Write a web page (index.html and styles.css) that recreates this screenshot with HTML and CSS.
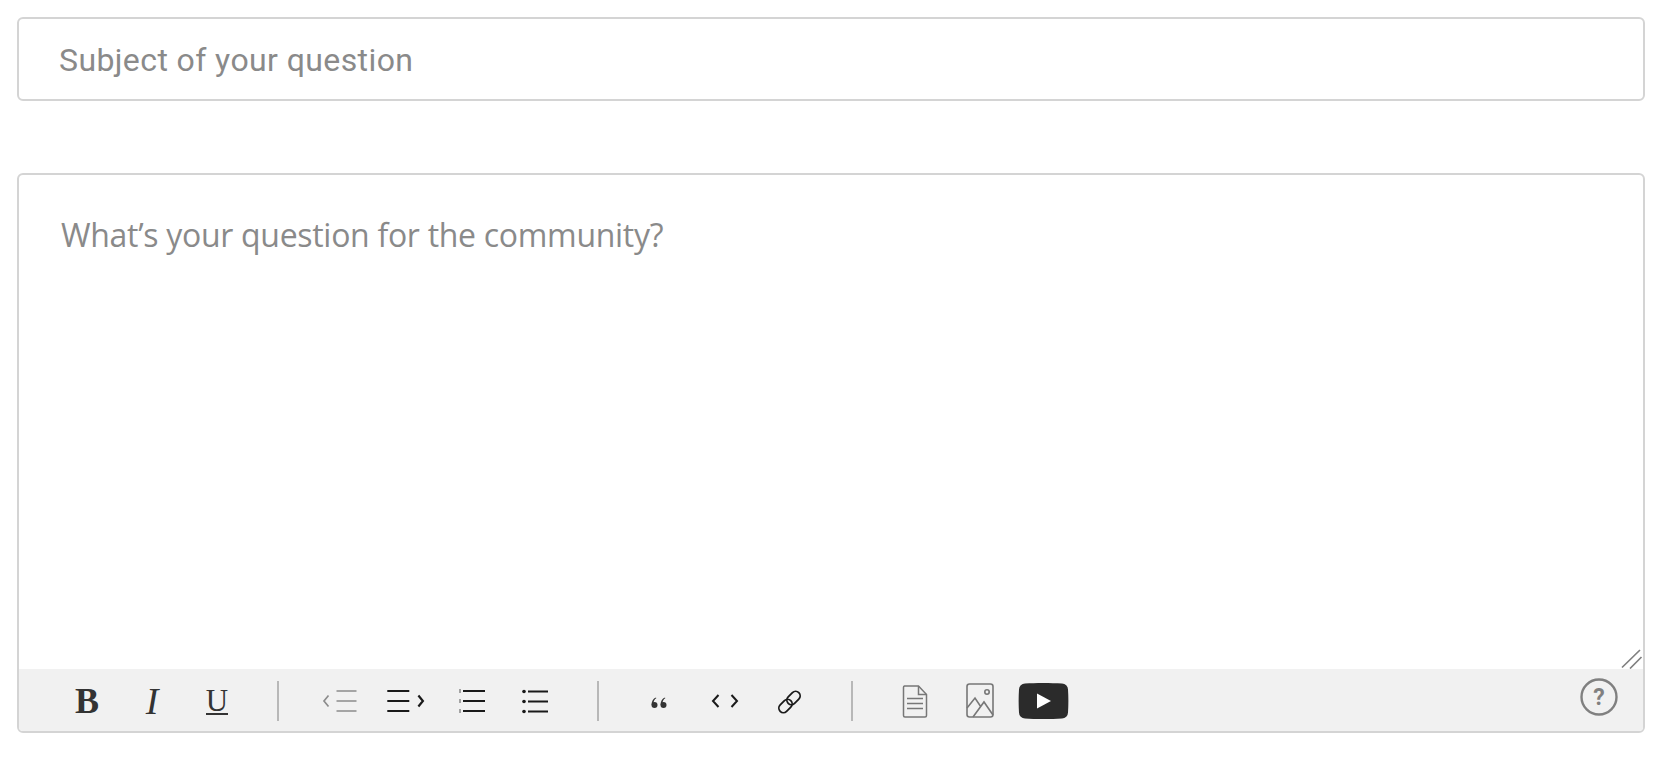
FILE: index.html
```html
<!DOCTYPE html>
<html lang="en">
<head>
<meta charset="utf-8">
<title>Ask a question</title>
<link rel="stylesheet" href="styles.css">
</head>
<body>
<form class="form">
  <div class="subject"><span class="subject-text">Subject of your question</span></div>
  <div class="editor">
    <div class="body">
      <span class="body-text">What’s your question for the community?</span>
      <svg class="grip" width="22" height="20" viewBox="0 0 22 20"><path d="M1 18.500 19 1M9 19.500 20.500 8" fill="none" stroke="#808080" stroke-width="1.700"/></svg>
    </div>
    <div class="toolbar">
      <div class="group">
        <span class="btn glyph bold">B</span>
        <span class="btn glyph italic">I</span>
        <span class="btn glyph under"><span class="under-text">U</span></span>
      </div>
      <div class="sep sep-first"></div>
      <div class="group">
        <span class="btn"><svg width="48" height="40" viewBox="0 0 48 40"><g fill="none" stroke="#8c8c8c" stroke-width="1.700"><path d="M11.500 14.500 7 20l4.500 5.500"/><path d="M19.500 10h20M19.500 20h20M19.500 30h20"/></g></svg></span>
        <span class="btn"><svg width="48" height="40" viewBox="0 0 48 40"><g fill="none" stroke="#1a1a1a" stroke-width="1.800"><path d="M5.300 10h22M5.300 20h22M5.300 30h22"/><path d="M36.400 14.500l4.500 5.500-4.500 5.500" stroke-width="2.200"/></g></svg></span>
        <span class="btn"><svg width="48" height="40" viewBox="0 0 48 40"><g fill="none" stroke="#1a1a1a" stroke-width="1.800"><path d="M16 10h22M16 20h22M16 30h22"/></g><g stroke="#555" stroke-width="1"><path d="M13 8v4M13 18v4M13 28v4"/></g></svg></span>
        <span class="btn"><svg width="48" height="40" viewBox="0 0 48 40"><g fill="none" stroke="#1a1a1a" stroke-width="1.800"><path d="M16 10.500h20M16 20.500h20M16 30.500h20"/></g><g fill="#1a1a1a"><circle cx="12" cy="10.500" r="1.800"/><circle cx="12" cy="20.500" r="1.800"/><circle cx="12" cy="30.500" r="1.800"/></g></svg></span>
      </div>
      <div class="sep"></div>
      <div class="group">
        <span class="btn"><svg width="48" height="40" viewBox="0 0 48 40"><g fill="#333" transform="translate(-1 1)"><circle cx="19.500" cy="23" r="3"/><circle cx="28.500" cy="23" r="3"/><path d="M16.600 23c0-4 1.500-6.500 4.400-7.500l.3.800c-1.700 1-2.700 2.600-2.700 4.700zM25.600 23c0-4 1.500-6.500 4.400-7.500l.3.800c-1.700 1-2.700 2.600-2.700 4.700z"/></g></svg></span>
        <span class="btn"><svg width="48" height="40" viewBox="0 0 48 40"><path d="M17.500 14 12 20l5.500 6M30.500 14 36 20l-5.500 6" fill="none" stroke="#1a1a1a" stroke-width="2"/></svg></span>
        <span class="btn"><svg width="48" height="40" viewBox="0 0 48 40"><g fill="none" stroke="#1a1a1a" stroke-width="1.800"><rect x="-7.500" y="-4.500" width="15" height="9" rx="4.500" transform="translate(27.500 17) rotate(-45)"/><rect x="-7.500" y="-4.500" width="15" height="9" rx="4.500" transform="translate(19.500 25) rotate(-45)"/></g></svg></span>
      </div>
      <div class="sep"></div>
      <div class="group">
        <span class="btn"><svg width="48" height="40" viewBox="0 0 48 40"><g fill="none" stroke="#777" stroke-width="1.500" transform="translate(1 .5)"><path d="M13.500 4.500h14l8 8.500v21a1.500 1.500 0 0 1-1.500 1.500H14a1.500 1.500 0 0 1-1.500-1.500V6a1.500 1.500 0 0 1 1-1.500z"/><path d="M27.500 4.500v8.500h8"/><path d="M16 17h16M16 22h16M16 27h16"/></g></svg></span>
        <span class="btn"><svg width="48" height="40" viewBox="0 0 48 40"><g fill="none" stroke="#777" stroke-width="1.600" transform="translate(1 -1)"><rect x="11" y="4" width="26" height="33" rx="2.500"/><circle cx="31" cy="12" r="2.200"/><path d="M11 28 19 18l6 9M17 37 28 22l9 13"/></g></svg></span>
        <span class="btn"><svg class="video" width="52" height="42" viewBox="0 0 52 42"><path d="M7 3.500C17 2.800 33 2.800 44 3.500a6 6 0 0 1 6 6c.5 8 .5 15 0 23a6 6 0 0 1-6 6c-11 .7-27 .7-37 0a6 6 0 0 1-6-6c-.5-8-.5-15 0-23a6 6 0 0 1 6-6z" fill="#2b2b2b"/><path d="M19 13.500 33 21 19 28.500z" fill="#fff"/></svg></span>
      </div>
      <svg class="help" width="38" height="38" viewBox="0 0 38 38"><circle cx="19" cy="19" r="17.500" fill="none" stroke="#808080" stroke-width="2.400"/><text x="19" y="26.500" class="help-mark">?</text></svg>
    </div>
  </div>
</form>
</body>
</html>
```
FILE: styles.css
```css
* { box-sizing: border-box; }
html, body { margin: 0; background: #fff; }
.form { padding: 17px 22px 25px 17px; display: flex; flex-direction: column; gap: 72px; }
.subject {
  height: 84px;
  border: 2px solid #d4d4d4;
  border-radius: 6px;
  padding: 1px 0 0 40px;
  display: flex;
  align-items: center;
}
.subject-text { font: 32px/1 Roboto, "Liberation Sans", sans-serif; color: #8a8a8a; letter-spacing: .4px; }
.editor {
  height: 560px;
  border: 2px solid #d4d4d4;
  border-radius: 6px;
  display: flex;
  flex-direction: column;
  overflow: hidden;
}
.body { flex: 1; position: relative; padding: 39px 0 0 42px; }
.body-text { font: 32px/1.3 "Open Sans", sans-serif; color: #8a8a8a; letter-spacing: -.3px; }
.grip { position: absolute; right: 0; bottom: 0; }
.toolbar {
  height: 62px;
  background: #f1f1f1;
  display: flex;
  align-items: center;
  padding: 2px 25px 0 44px;
}
.group { display: flex; gap: 17px; }
.btn { width: 48px; height: 40px; display: flex; align-items: center; justify-content: center; color: #333; }
.btn svg { display: block; flex: none; }
.glyph { font-family: "Liberation Serif", serif; line-height: 1; }
.bold { font-size: 36px; font-weight: 700; }
.italic { font-size: 38px; font-style: italic; }
.under { font-size: 31px; }
.under-text { border-bottom: 2px solid #333; line-height: 25px; }
.sep { width: 2px; height: 40px; background: #b8b8b8; margin: 0 37px; }
.sep-first { margin: 0 38px 0 36px; }
.help { margin: -8px 0 0 auto; }
.help-mark { font: 700 23px Roboto, sans-serif; fill: #808080; text-anchor: middle; }
```
